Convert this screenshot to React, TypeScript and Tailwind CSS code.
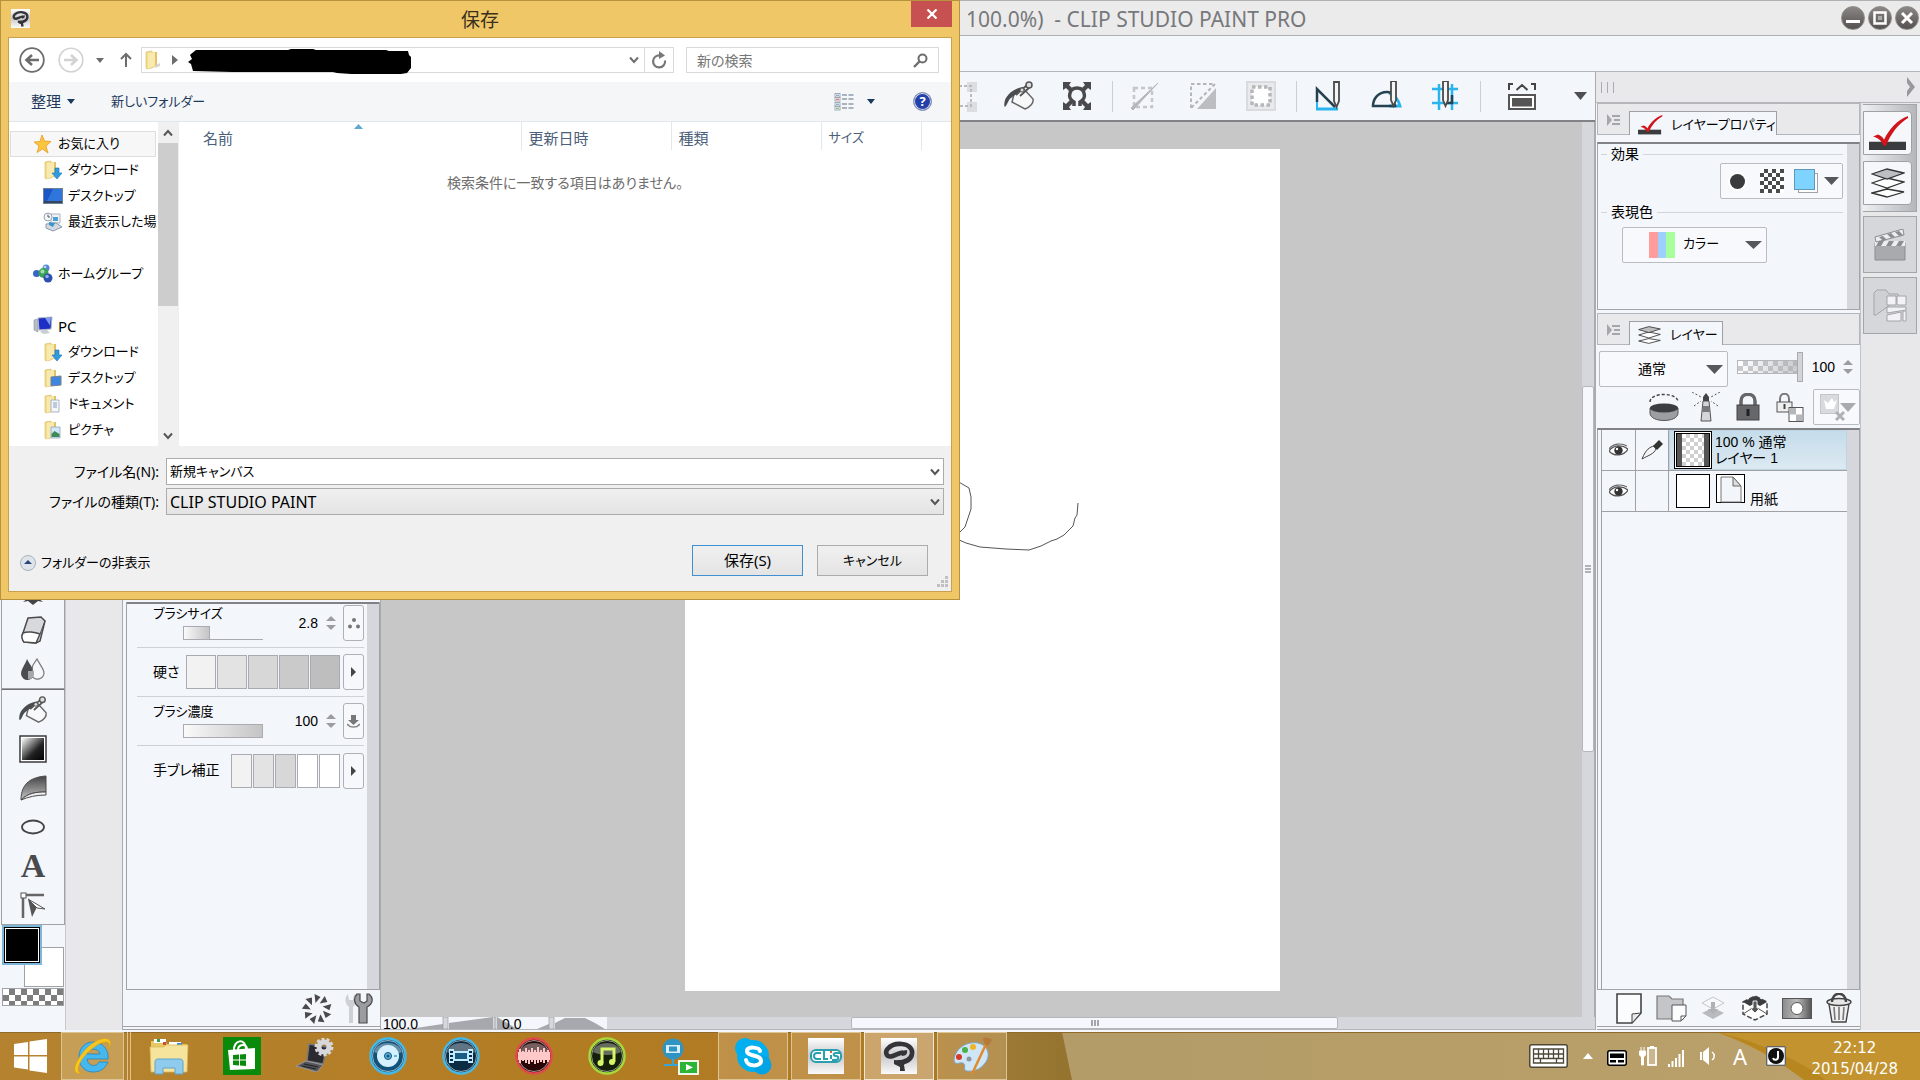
import React, { ReactNode } from "react";

type P = { children?: ReactNode };

/* ---------- shared pieces ---------- */

function Caret({ w = 10, h = 6, c = "#555", className = "" }: { w?: number; h?: number; c?: string; className?: string }) {
  return (
    <svg width={w} height={h} viewBox="0 0 10 6" preserveAspectRatio="none" className={className} aria-hidden>
      <path d="M0 0h10L5 6z" fill={c} />
    </svg>
  );
}

function Chevron({ c = "#555", up = false }: { c?: string; up?: boolean }) {
  return (
    <svg width="10" height="8" viewBox="0 0 10 8" className={up ? "rotate-180" : ""} aria-hidden>
      <path d="M1 1.5l4 4.5 4-4.5" fill="none" stroke={c} strokeWidth="2" />
    </svg>
  );
}

function Spinner({ label }: { label: string }) {
  return (
    <button aria-label={label} className="flex w-[10px] flex-col items-center gap-1">
      <Caret w={10} h={5} c="#9a9ca0" className="rotate-180" />
      <Caret w={10} h={5} c="#9a9ca0" />
    </button>
  );
}

function ClipMark({ size = 36 }: { size?: number }) {
  return (
    <svg width={size} height={size} viewBox="0 0 36 36" aria-hidden>
      <defs>
        <linearGradient id="cm" x1="0" y1="0" x2="0" y2="1">
          <stop offset="0" stopColor="#fff" />
          <stop offset=".5" stopColor="#c9c9cc" />
          <stop offset="1" stopColor="#fafafa" />
        </linearGradient>
      </defs>
      <rect width="36" height="36" fill="url(#cm)" />
      <path d="M22 14.500C17 15 14 17.500 10 18.500 5 19 4 14 6.500 11 10 7 16 5.500 21 6c7 .5 11 5 10 10-1 6-7 8.500-15 8.500" fill="none" stroke="#333338" strokeWidth="4.600" />
      <path d="M20 13l6-1c1 3-1 6-5 6z" fill="#333338" />
      <path d="M13 22l13 1-3 4 1 6h-5v-4l-6-3z" fill="#333338" />
    </svg>
  );
}

function Folder({ overlay }: { overlay?: ReactNode }) {
  return (
    <svg width="20" height="20" viewBox="0 0 20 20" aria-hidden>
      <path d="M2 2l6-1v17l-5 1-1-1z" fill="#f3dc8c" stroke="#d9b95c" strokeWidth=".6" />
      <path d="M8 2h5v14l-5 2z" fill="#e3c263" />
      <path d="M4 3l7-1v14l-7 3z" fill="#f8e9ae" />
      <path d="M12 15l4-2v3l-5 2z" fill="#d5d5d8" />
      {overlay}
    </svg>
  );
}

/* ---------- save dialog ---------- */

const dl = <path d="M12 8h4v5h3l-5 6-5-6h3z" fill="#2d9be0" stroke="#1c74b4" strokeWidth=".6" />;
const dt = <path d="M8 9l10-1v9l-10 1z" fill="#3f86e0" stroke="#777f8c" />;
const doc = <g><path d="M8 6h8v12H8z" fill="#f4f6fa" stroke="#9aa4b4" strokeWidth=".8" /><path d="M10 9h4M10 11h4M10 13h4" stroke="#6f86b4" strokeWidth=".8" /></g>;
const pic = <g><path d="M8 7h9v11H8z" fill="#cfe8fa" stroke="#9aa4b4" strokeWidth=".8" /><path d="M8.500 14l3-3 5 3v3h-8z" fill="#3d8a5a" /></g>;

const star = (
  <svg width="20" height="20" viewBox="0 0 20 20" aria-hidden>
    <path d="M9 1l2.500 6 6.500.5-5 4.500 2 7-5.500-4-5.500 3.500 2-6.500-5-4 6-.5z" fill="#fbc53d" stroke="#e8992a" strokeWidth=".8" />
  </svg>
);
const desktop = (
  <svg width="20" height="20" viewBox="0 0 20 20" aria-hidden>
    <rect x=".5" y="2.500" width="19" height="15" fill="#2f76dc" stroke="#6f7f94" />
    <path d="M1 3h9l-6 12H1z" fill="#1c56c4" /><path d="M1 15h18v2H1z" fill="#34465e" />
  </svg>
);
const recent = (
  <svg width="20" height="20" viewBox="0 0 20 20" aria-hidden>
    <path d="M8 2h9v9H8z" fill="#eef2f6" stroke="#a9b4c0" /><path d="M10 5h5v4h-5z" fill="#4f9fd0" />
    <path d="M3 12l10-1 6 4-9 4-7-3z" fill="#d3dae2" stroke="#8d99a6" />
    <path d="M6 10l6 1-2 4-4-2z" fill="#3a94c8" />
    <circle cx="5" cy="5" r="4" fill="#f3f6f9" stroke="#98a4b0" /><path d="M5 2.500V5h2" stroke="#556" fill="none" />
  </svg>
);
const home = (
  <svg width="20" height="20" viewBox="0 0 20 20" aria-hidden>
    <circle cx="3.500" cy="9.500" r="3.500" fill="#3567c8" /><circle cx="13" cy="4" r="3.500" fill="#4f86da" /><circle cx="12" cy="3" r="1.500" fill="#b5d2f5" />
    <circle cx="10.500" cy="9" r="5" fill="#3ba356" /><circle cx="9.500" cy="7.500" r="2" fill="#a3e0a8" />
    <circle cx="15" cy="14" r="4.500" fill="#2b50ae" /><circle cx="14" cy="12.500" r="1.800" fill="#8fb0ea" />
  </svg>
);
const pc = (
  <svg width="20" height="20" viewBox="0 0 20 20" aria-hidden>
    <path d="M1 4l4-1v13l-4-2z" fill="#b8bec6" stroke="#8a929c" strokeWidth=".6" />
    <path d="M5 2l14-1-1 12-12 1z" fill="#1d2fc4" stroke="#b0b8c4" /><path d="M12 2l6-.5-1 8z" fill="#7d9cf0" />
    <path d="M9 14h5l3 3-6 1-4-2z" fill="#c9ced4" />
  </svg>
);

type Item = { label: string; icon?: ReactNode; depth: number; on?: boolean; latin?: boolean };
const tree: Item[] = [
  { label: "お気に入り", icon: star, depth: 0, on: true },
  { label: "ダウンロード", icon: <Folder overlay={dl} />, depth: 1 },
  { label: "デスクトップ", icon: desktop, depth: 1 },
  { label: "最近表示した場所", icon: recent, depth: 1 },
  { label: "", depth: 0 },
  { label: "ホームグループ", icon: home, depth: 0 },
  { label: "", depth: 0 },
  { label: "PC", icon: pc, depth: 0, latin: true },
  { label: "ダウンロード", icon: <Folder overlay={dl} />, depth: 1 },
  { label: "デスクトップ", icon: <Folder overlay={dt} />, depth: 1 },
  { label: "ドキュメント", icon: <Folder overlay={doc} />, depth: 1 },
  { label: "ピクチャ", icon: <Folder overlay={pic} />, depth: 1 },
];

function SaveDialog() {
  return (
    <section
      role="dialog"
      aria-label="保存"
      className="absolute top-0 left-0 z-20 flex h-[600px] w-[960px] flex-col border border-[#b8933f] bg-[#f0c767] px-[7px] pb-[7px] font-['Noto_Sans','Noto_Sans_CJK_JP',sans-serif] text-[14px] text-black [font-feature-settings:'palt']"
    >
      <header className="flex h-9 shrink-0 items-start">
        <div className="w-[41px] pt-2 pl-[3px]">
          <ClipMark size={19} />
        </div>
        <h1 className="flex-1 pt-[5px] text-center text-[19px] leading-7 text-[#3a3020]">保存</h1>
        <button aria-label="閉じる" className="flex h-[26px] w-[41px] items-center justify-center bg-[#c75050]">
          <svg width="12" height="10" viewBox="0 0 12 10"><path d="M1.500.5l9 9M10.500.5l-9 9" stroke="#fff" strokeWidth="2.200" /></svg>
        </button>
      </header>
      <div className="flex min-h-0 flex-1 flex-col border border-[#c9a14c] bg-white">
        {/* address row */}
        <div className="flex h-[44px] shrink-0 items-center pr-3 pl-[10px]">
          <button aria-label="戻る">
            <svg width="26" height="26" viewBox="0 0 26 26"><circle cx="13" cy="13" r="11.800" fill="none" stroke="#6d6d6d" strokeWidth="1.800" /><path d="M20 13H8m5-5l-5.500 5L13 18" fill="none" stroke="#6d6d6d" strokeWidth="2.600" /></svg>
          </button>
          <button aria-label="進む" className="ml-[13px]">
            <svg width="26" height="26" viewBox="0 0 26 26"><circle cx="13" cy="13" r="11.800" fill="none" stroke="#d2d2d2" strokeWidth="1.600" /><path d="M6 13h12m-5-5l5.500 5L13 18" fill="none" stroke="#d2d2d2" strokeWidth="2.600" /></svg>
          </button>
          <button aria-label="履歴" className="ml-[12px]"><Caret w={8} h={5} c="#6d6d6d" /></button>
          <button aria-label="上へ" className="ml-[15px]">
            <svg width="14" height="16" viewBox="0 0 14 16"><path d="M7 15V2M2 7l5-5 5 5" fill="none" stroke="#6d6d6d" strokeWidth="2" /></svg>
          </button>
          <div className="ml-2 flex h-[26px] flex-1 items-center border border-[#d9d9d9] pl-[2px]">
            <Folder />
            <svg width="6" height="10" viewBox="0 0 6 10" className="ml-[8px]"><path d="M0 0l6 5-6 5z" fill="#6d6d6d" /></svg>
            <svg width="224" height="26" viewBox="0 0 224 26" className="mt-1 ml-[10px]" aria-hidden>
              <path d="M3 5L8 1h92l3-1h22l3 1h70l3 1h19l1 4 2 2v11l-4 5-6 1h-50l-14-1-4-1H44L5 22 3 15 0 13l4-3-2-4z" fill="#000" />
            </svg>
            <button aria-label="場所の一覧" className="ml-auto flex h-full w-[20px] items-center justify-center"><Chevron c="#6d6d6d" /></button>
            <button aria-label="最新の情報に更新" className="flex h-full w-[29px] items-center justify-center border-l border-[#d9d9d9]">
              <svg width="16" height="18" viewBox="0 0 16 18"><path d="M9 4.500a6 6 0 1 0 5 5" fill="none" stroke="#777" strokeWidth="2.200" /><path d="M8 0l6 4.500L8 8z" fill="#777" /></svg>
            </button>
          </div>
          <div className="ml-3 flex h-[26px] w-[253px] items-center border border-[#d9d9d9] pr-[10px]">
            <input aria-label="検索" placeholder="新の検索" className="min-w-0 flex-1 bg-transparent pl-[10px] outline-none placeholder:text-[#767676]" />
            <svg width="15" height="15" viewBox="0 0 15 15"><circle cx="9.500" cy="5.500" r="4" fill="none" stroke="#6d6d6d" strokeWidth="2" /><path d="M7 8l-6 6" stroke="#6d6d6d" strokeWidth="2.400" /></svg>
          </div>
        </div>
        {/* command bar */}
        <div className="flex h-[40px] shrink-0 items-center border-b border-[#e2e6ec] bg-[#f4f6f8] pr-[19px] pl-[22px] text-[#1e395b]">
          <button className="flex items-center gap-[6px] text-[15px]">整理<Caret w={8} h={5} c="#1e395b" /></button>
          <button className="ml-9 text-[13px]">新しいフォルダー</button>
          <button aria-label="表示" className="ml-auto flex items-center gap-[13px]">
            <svg width="20" height="18" viewBox="0 0 20 18">
              {[1, 5, 10, 14].map((y, i) => (
                <g key={y}>
                  <rect x="1" y={y - 0.5} width="5" height="3.500" fill="#fff" stroke="#8e9aa8" strokeWidth=".8" />
                  <path d={`M2 ${y + 1.2}h3`} stroke={["#4a90c8", "#c84a4a", "#4a90c8", "#5aa858"][i]} />
                  <path d={`M8 ${y + 1}h5M14.500 ${y + 1}h5`} stroke="#5d6f88" strokeWidth="1.200" />
                </g>
              ))}
            </svg>
            <Caret w={8} h={5} c="#1e395b" />
          </button>
          <button aria-label="ヘルプ" className="ml-[38px] flex h-[19px] w-[19px] items-center justify-center rounded-full border border-[#8b94b8] bg-[#2341a8] text-[13px] leading-none font-bold text-white ring-1 ring-[#d5d9e6] ring-inset">?</button>
        </div>
        {/* body */}
        <div className="flex min-h-0 flex-1">
          <nav className="flex w-[149px] shrink-0 flex-col overflow-hidden pt-[9px] text-[13px]">
            {tree.map((t, i) => (
              <div
                key={i}
                className={
                  "flex h-[26px] shrink-0 items-center overflow-hidden border whitespace-nowrap " +
                  (t.on ? "mr-[2px] ml-px border-[#dedede] bg-[#f7f7f7] pl-[22px]" : t.depth ? "border-transparent pl-[33px]" : "border-transparent pl-[23px]")
                }
              >
                <span className="shrink-0">{t.icon}</span>
                <span className={"ml-[5px] " + (t.latin ? "text-[15px]" : "")}>{t.label}</span>
              </div>
            ))}
          </nav>
          <div className="flex w-[20px] shrink-0 flex-col items-center bg-[#f0f0f0]">
            <button aria-label="上へスクロール" className="flex h-[21px] items-center"><Chevron up /></button>
            <div className="h-[163px] w-full bg-[#cdcdcd]" />
            <button aria-label="下へスクロール" className="mt-auto flex h-[21px] items-center"><Chevron /></button>
          </div>
          <div className="flex-1 border-l border-[#eeeeee]">
            <table className="w-full table-fixed text-[#4c607a]">
              <thead>
                <tr className="h-[28px] text-left text-[15px]">
                  <th className="relative w-[342px] border-r border-[#e3e8ee] pt-[4px] pl-[24px] font-normal">
                    名前
                    <Caret w={9} h={5} c="#5fa9cf" className="absolute top-[2px] left-[175px] rotate-180" />
                  </th>
                  <th className="w-[150px] border-r border-[#e3e8ee] pt-[4px] pl-[7px] font-normal">更新日時</th>
                  <th className="w-[150px] border-r border-[#e3e8ee] pt-[4px] pl-[7px] font-normal">種類</th>
                  <th className="w-[100px] border-r border-[#e3e8ee] pt-[4px] pl-[7px] text-[13px] font-normal">サイズ</th>
                  <th aria-label="空き" />
                </tr>
              </thead>
              <tbody>
                <tr>
                  <td colSpan={5} className="pt-[22px] text-center text-[#6d6d6d]">検索条件に一致する項目はありません。</td>
                </tr>
              </tbody>
            </table>
          </div>
        </div>
        {/* file fields */}
        <div className="flex h-[145px] shrink-0 flex-col bg-[#f0f0f0] pt-[12px]">
          <div className="flex items-center pr-[7px]">
            <label htmlFor="fname" className="w-[150px] text-right">ファイル名(N):</label>
            <div className="ml-[7px] flex h-[27px] flex-1 items-center border border-[#acacac] bg-white">
              <input id="fname" defaultValue="新規キャンバス" className="min-w-0 flex-1 bg-transparent pl-[3px] text-[13px] outline-none" />
              <button aria-label="ファイル名の候補" className="px-[3px]"><Chevron /></button>
            </div>
          </div>
          <div className="mt-[3px] flex items-center pr-[7px]">
            <label htmlFor="ftype" className="w-[150px] text-right">ファイルの種類(T):</label>
            <div className="relative ml-[7px] flex h-[27px] flex-1 items-center border border-[#acacac] bg-linear-to-b from-[#f0f0f0] to-[#e4e4e4]">
              <select id="ftype" className="w-full appearance-none bg-transparent pl-[3px] text-[16px] outline-none">
                <option>CLIP STUDIO PAINT</option>
              </select>
              <span className="pointer-events-none absolute right-[3px]"><Chevron /></span>
            </div>
          </div>
          <div className="mt-[30px] flex items-center pr-[23px] pl-[11px]">
            <button className="flex items-center gap-[5px] pt-[5px] text-[13px]">
              <svg width="16" height="16" viewBox="0 0 16 16"><circle cx="8" cy="8" r="7.500" fill="#dfe4ea" stroke="#a8b2be" /><path d="M8 5l4 4H4z" fill="#27457f" /></svg>
              フォルダーの非表示
            </button>
            <button className="ml-auto h-[31px] w-[111px] border border-[#3f8fd2] bg-linear-to-b from-[#f0f0f0] to-[#e4e4e4] text-[15px]">保存(S)</button>
            <button className="ml-[14px] h-[31px] w-[111px] border border-[#acacac] bg-linear-to-b from-[#f0f0f0] to-[#e4e4e4] text-[13px]">キャンセル</button>
          </div>
          <svg width="11" height="11" viewBox="0 0 11 11" className="mr-[3px] ml-auto" aria-hidden>
            <path d="M8 0h3v3H8zM4 4h3v3H4zM8 4h3v3H8zM0 8h3v3H0zM4 8h3v3H4zM8 8h3v3H8z" fill="#c0c0c4" />
          </svg>
        </div>
      </div>
    </section>
  );
}

/* ---------- paint window ---------- */

function WindowBtn({ label, children }: { label: string } & P) {
  return (
    <button aria-label={label} className="flex h-6 w-6 items-center justify-center rounded-full border border-[#8f8c8a] bg-linear-to-b from-[#8b8785] to-[#555150]">
      <svg width="16" height="16" viewBox="0 0 16 16" fill="none" stroke="#fff">{children}</svg>
    </button>
  );
}

function Bucket({ size = 32 }: { size?: number }) {
  return (
    <svg width={size} height={size} viewBox="0 0 32 32" aria-hidden>
      <path d="M11 14l9-6 10 11c1 4-3 8-8 10L9 22z" fill="#f8f8fa" stroke="#666" strokeWidth="1.500" />
      <path d="M20 7C12 8 5 13 2 20c-1 4-1 6 0 7 3-3 3-7 6-9 3-3 8-5 12-8z" fill="#4a4c50" />
      <path d="M13 15L24 5M17 16L27 7" stroke="#555" strokeWidth="1.800" />
      <circle cx="26" cy="5" r="3" fill="#ddd" stroke="#555" strokeWidth="1.500" /><circle cx="19" cy="10" r="2" fill="#ddd" stroke="#555" />
    </svg>
  );
}

function Pen({ x }: { x: number }) {
  return <path d={`M${x} 1h5v19l-2.500 6-2.500-6z`} fill="#f5f5f5" stroke="#4a4a4a" strokeWidth="1.800" />;
}

const toolbarGroups: { label: string; icon: ReactNode }[][] = [
  [
    { label: "選択範囲外を消去", icon: <svg width="32" height="32" viewBox="0 0 32 32"><path d="M22 2h10v10H22zM22 22h10v10H22z" fill="#dcdde0" /><path d="M4 6h22v20H4z" fill="none" stroke="#b9babd" strokeWidth="2" strokeDasharray="3 2" /></svg> },
    { label: "塗りつぶし", icon: <Bucket /> },
    { label: "拡大・縮小・回転", icon: <svg width="28" height="28" viewBox="0 0 28 28"><path d="M0 0h8L6 3l4 4-3 3-4-4-3 2zM28 0h-8l2 3-4 4 3 3 4-4 3 2zM0 28h8l-2-3 4-4-3-3-4 4-3-2zM28 28h-8l2-3-4-4 3-3 4 4 3-2z" fill="#4a4a4c" /><path d="M11 24v-4c-4-2-5-6-4-9 1-4 4-5 7-5s6 1 7 5c1 3 0 7-4 9v4" fill="none" stroke="#4a4a4c" strokeWidth="3.500" /></svg> },
  ],
  [
    { label: "選択を解除", icon: <svg width="30" height="30" viewBox="0 0 30 30"><path d="M4 7h18v19H4z" fill="none" stroke="#c5c6c9" strokeWidth="2.500" strokeDasharray="4 3" /><path d="M1 27L28 2 3 29z" fill="#b5b6b9" stroke="#b5b6b9" /></svg> },
    { label: "選択範囲を反転", icon: <svg width="28" height="28" viewBox="0 0 28 28"><path d="M27 6v21H8z" fill="#bcbdc0" /><path d="M2 26V2h24z" fill="none" stroke="#b5b6b9" strokeWidth="2" strokeDasharray="3.500 2.500" /></svg> },
    { label: "選択範囲の境界線を表示", icon: <svg width="30" height="30" viewBox="0 0 30 30"><path d="M1 1h28v28H1z" fill="#e9eaec" stroke="#dadbde" strokeWidth="2" /><path d="M6 6h18v18H6z" fill="#fff" stroke="#b5b6b9" strokeWidth="3.500" strokeDasharray="3.500 2.500" /></svg> },
  ],
  [
    { label: "定規にスナップ", icon: <svg width="30" height="30" viewBox="0 0 30 30"><path d="M3 28V8" stroke="#2bb5ee" strokeWidth="2" /><path d="M2 28h22" stroke="#2bb5ee" strokeWidth="3" /><path d="M3 21V8l18 18" fill="none" stroke="#26424f" strokeWidth="2.500" /><Pen x={20} /></svg> },
    { label: "特殊定規にスナップ", icon: <svg width="32" height="30" viewBox="0 0 32 30"><path d="M18 12c6 2 10 8 11 13H18" fill="none" stroke="#2bb5ee" strokeWidth="3" /><path d="M2 25c0-7 5-14 14-14 3 0 4 1 5 1L24 25z" fill="none" stroke="#26424f" strokeWidth="2.500" /><g transform="translate(0 -1)"><Pen x={20} /></g></svg> },
    { label: "グリッドにスナップ", icon: <svg width="28" height="30" viewBox="0 0 28 30"><path d="M8 3v26M21 3v26M1 8h26M1 22h26" stroke="#2bb5ee" strokeWidth="2.500" /><path d="M15 22h6v-8" fill="none" stroke="#26424f" strokeWidth="2.500" /><g transform="translate(0 -1)"><Pen x={12} /></g></svg> },
  ],
];

function Toolbar() {
  return (
    <div className="flex h-[50px] shrink-0 items-center justify-end border-b-2 border-[#808286] bg-[#f3f6fb] pr-[8px]">
      {toolbarGroups.map((g, i) => (
        <React.Fragment key={i}>
          {g.map((t) => (
            <button key={t.label} aria-label={t.label} className="flex w-[58px] items-center justify-center">{t.icon}</button>
          ))}
          <div className="mr-[3px] ml-[6px] h-[31px] w-px bg-[#cdcfd3]" />
        </React.Fragment>
      ))}
      <button aria-label="ウィンドウ表示" className="flex w-[76px] items-center justify-center">
        <svg width="28" height="27" viewBox="0 0 28 27"><path d="M1 7V1h4M27 7V1h-4M8.500 7L14 2l5.500 5" fill="none" stroke="#444" strokeWidth="2" /><rect x="1" y="12" width="26" height="14" fill="#fff" stroke="#555" strokeWidth="2" /><rect x="4" y="15" width="20" height="8.500" fill="#555" /></svg>
      </button>
      <button aria-label="その他" className="ml-[14px]"><Caret w={13} h={8} c="#4d4f52" /></button>
    </div>
  );
}

const lowerTools: { label: string; icon: ReactNode }[] = [
  { label: "塗りつぶし", icon: <Bucket size={30} /> },
  { label: "グラデーション", icon: <svg width="28" height="28" viewBox="0 0 28 28"><defs><linearGradient id="gt" x1="0" y1="0" x2="1" y2="1"><stop offset="0" stopColor="#fff" /><stop offset=".6" stopColor="#222" /><stop offset="1" stopColor="#000" /></linearGradient></defs><rect x="1" y="1" width="26" height="26" fill="#fff" stroke="#3a3a3c" strokeWidth="1.500" /><rect x="3" y="3" width="22" height="22" fill="url(#gt)" /></svg> },
  { label: "図形", icon: <svg width="28" height="28" viewBox="0 0 28 28"><defs><linearGradient id="fg" x1="0" y1="0" x2="0" y2="1"><stop offset="0" stopColor="#444" /><stop offset="1" stopColor="#c4c4c6" /></linearGradient></defs><path d="M27 2C14 3 2 8 2 26c7-7 15-8 25-8z" fill="url(#fg)" stroke="#4a4a4a" /><path d="M2 26c7-7 15-8 25-8v3c-10 0-18 2-25 5z" fill="#eee" stroke="#4a4a4a" /></svg> },
  { label: "楕円", icon: <svg width="26" height="18" viewBox="0 0 26 18"><ellipse cx="13" cy="9" rx="11" ry="6.500" fill="none" stroke="#444" strokeWidth="1.800" /></svg> },
  { label: "テキスト", icon: <span className="font-['Liberation_Serif',serif] text-[34px] leading-9 font-bold text-[#4a4a4c]">A</span> },
  { label: "線修正", icon: <svg width="28" height="28" viewBox="0 0 28 28"><path d="M4 5v22M5 4h20" stroke="#666" strokeWidth="2.500" /><rect x="2" y="2" width="5" height="5" fill="#fff" stroke="#555" /><path d="M9 8l4 18 5-10z" fill="#555" /><path d="M9 8l17 10-8-1z" fill="#fff" stroke="#555" /></svg> },
];

const upperTools: { label: string; icon: ReactNode }[] = [
  { label: "デコレーション", icon: <svg width="24" height="28" viewBox="0 0 24 28"><path d="M12 1l3 6 6-2-2 6 5 4-5 2-1 5H6l-1-5-5-2 5-4-2-6 6 2z" fill="#777" /><path d="M2 25l5-4 5 1 5-1 5 4-5-1-5 4-5-4z" fill="#444" /></svg> },
  { label: "消しゴム", icon: <svg width="28" height="30" viewBox="0 0 28 30"><path d="M9 3l13-1 4 4-5 20-4 2-12-1-2-6z" fill="#d8d9dc" stroke="#4a4a4c" strokeWidth="1.500" /><path d="M4 18c4-2 12-1 17 1l-4 9-12-1c-2-2-3-6-1-9z" fill="#fff" stroke="#4a4a4c" strokeWidth="1.500" /><path d="M21 19l5-13" stroke="#4a4a4c" /></svg> },
  { label: "色混ぜ", icon: <svg width="28" height="24" viewBox="0 0 28 24"><path d="M8 2c3 6 7 10 7 14a6.500 6.500 0 0 1-13 1C2 12 6 8 8 2z" fill="#4a4c50" /><path d="M18 2c3 6 7 10 7 14a6.500 6.500 0 0 1-12 3c2-5-1-8 1-11z" fill="#f6f7fa" stroke="#777" strokeWidth="1.200" /><path d="M9 14h6v4a6 6 0 0 1-6 4z" fill="#a6a7aa" /></svg> },
];

function ToolButton({ label, children }: { label: string } & P) {
  return <button aria-label={label} className="flex h-[39px] w-full shrink-0 items-center justify-center">{children}</button>;
}

function ToolColumn() {
  return (
    <div className="flex w-[66px] shrink-0 flex-col border-r border-[#c8c9cc] bg-[#f3f6fb] pl-px">
      <div className="flex h-[567px] shrink-0 flex-col justify-end border-x border-b border-[#9fa1a5]">
        {upperTools.map((t) => <ToolButton key={t.label} label={t.label}>{t.icon}</ToolButton>)}
      </div>
      <div className="flex shrink-0 flex-col border border-[#9fa1a5] border-t-[#6f7175]">
        {lowerTools.map((t) => <ToolButton key={t.label} label={t.label}>{t.icon}</ToolButton>)}
      </div>
      <div className="relative ml-px h-[62px] w-[62px] shrink-0">
        <button aria-label="サブカラー" className="absolute right-0 bottom-0 h-10 w-10 border border-[#9fa1a5] bg-white" />
        <button aria-label="メインカラー" className="absolute top-0 left-0 flex h-10 w-10 border-2 border-[#7cb6da] bg-black p-px">
          <span className="flex-1 border border-white" />
        </button>
      </div>
      <button aria-label="透明色" className="mt-px ml-px h-[18px] w-[62px] shrink-0 border border-[#9fa1a5] bg-[repeating-conic-gradient(#7d7d7d_0_25%,#fff_0_50%)] bg-[length:12px_12px]" />
    </div>
  );
}

function SideButton({ label, children }: { label: string } & P) {
  return <button aria-label={label} className="flex h-9 w-[21px] items-center justify-center rounded-[3px] border border-[#aeb0b5] bg-[#f6f8fc]">{children}</button>;
}

const playIcon = <svg width="5" height="10" viewBox="0 0 5 10"><path d="M0 0l5 5-5 5z" fill="#444" /></svg>;

function SwatchRow({ label, colors, wide }: { label: string; colors: string[]; wide?: boolean }) {
  return (
    <div className="flex h-[49px] shrink-0 items-center border-b border-[#cfd1d6]">
      <span className="ml-4 flex-1">{label}</span>
      <div className="mr-[3px] flex gap-px">
        {colors.map((c, i) => (
          <button key={i} aria-label={`${label} ${i + 1}`} className={(wide ? "w-[30px] " : "w-[21px] ") + "h-[34px] border border-[#a9abb0] " + c} />
        ))}
      </div>
      <SideButton label={`${label}の詳細`}>{playIcon}</SideButton>
    </div>
  );
}

function SliderRow({ label, id, value, fill, icon, button }: { label: string; id: string; value: string; fill: string; icon: ReactNode; button: string }) {
  return (
    <div className="flex h-[49px] shrink-0 items-center border-b border-[#cfd1d6]">
      <div className="ml-4 flex-1">
        <label htmlFor={id} className="block pb-1 text-[13px] leading-4">{label}</label>
        <div className="relative ml-[30px] flex h-[14px] w-[80px]">
          <div className={"border border-[#a9abb0] bg-linear-to-r from-[#fafafa] to-[#c4c4c4] " + fill} />
          <div className="flex-1 border-b border-[#a9abb0]" />
          <input id={id} type="range" defaultValue={value} className="absolute inset-0 m-0 h-full w-full opacity-0" />
        </div>
      </div>
      <span className="mr-2">{value}</span>
      <Spinner label={`${label}の増減`} />
      <div className="ml-[7px]"><SideButton label={button}>{icon}</SideButton></div>
    </div>
  );
}

function BrushPanel() {
  return (
    <div className="ml-[56px] flex w-[259px] shrink-0 flex-col border-x border-[#a9abb0] bg-[#f3f6fb] pl-[3px]">
      <div className="h-[480px] shrink-0" />
      <div className="flex min-h-0 flex-1 flex-col border-x border-b border-[#9fa1a5]">
        <div className="flex min-h-0 flex-1 border-t-2 border-[#808286]">
          <div className="flex min-w-0 flex-1 flex-col pr-[3px] pl-[10px]">
            <div className="-mt-[5px] flex flex-col">
              <SliderRow label="ブラシサイズ" id="bsize" value="2.8" fill="w-[27px]" button="影響元設定" icon={<svg width="12" height="11" viewBox="0 0 12 11"><circle cx="6" cy="2" r="2" fill="#777" /><circle cx="2" cy="8.500" r="2" fill="#777" /><circle cx="10" cy="8.500" r="2" fill="#777" /></svg>} />
              <SwatchRow label="硬さ" wide colors={["bg-[#f2f2f2]", "bg-[#e3e3e3]", "bg-[#d7d7d7]", "bg-[#cacaca]", "bg-[#bebebe]"]} />
              <SliderRow label="ブラシ濃度" id="bdens" value="100" fill="w-[80px]" button="筆圧設定" icon={<svg width="13" height="13" viewBox="0 0 13 13"><path d="M4 0h5v5h3L6.500 10 1 5h3z" fill="#777" /><path d="M0 9c3 4 10 4 13 0" fill="none" stroke="#888" strokeWidth="1.500" /></svg>} />
              <div className="[&>div]:border-0">
                <SwatchRow label="手ブレ補正" colors={["bg-[#f2f2f2]", "bg-[#e3e3e3]", "bg-[#d7d7d7]", "bg-white", "bg-white"]} />
              </div>
            </div>
          </div>
          <div className="w-[12px] bg-[#d6d7dd]" />
        </div>
      </div>
      <div className="flex h-9 shrink-0 items-center justify-end gap-[13px] pt-px pr-[7px]">
        <button aria-label="初期設定に戻す">
          <svg width="30" height="30" viewBox="0 0 30 30">
            {[0, 40, 80, 120, 160, 200, 240, 280, 320].map((a) => (
              <path key={a} d="M12.500 0l6 3-5 6z" fill="#4a4a4c" transform={`rotate(${a} 15 15)`} />
            ))}
          </svg>
        </button>
        <button aria-label="サブツール詳細">
          <svg width="28" height="31" viewBox="0 0 28 31"><path d="M4 30V14C0 11-1 5 3 1l1 6h4l1-6c3 4 3 10-1 13v16z" fill="#cfd0d3" /><path d="M14 30V14c-5-3-6-9-2-13h3v7l4 2 3-2V1h2c5 4 4 10-2 13v16z" fill="#9b9c9f" stroke="#4a4a4c" strokeWidth="1.200" /></svg>
        </button>
      </div>
      <div className="-ml-[3px] h-[4px] shrink-0 border-y border-[#9fa1a5]" />
    </div>
  );
}

function CanvasArea() {
  return (
    <main className="flex min-w-0 flex-1 flex-col">
      <div className="flex min-h-0 flex-1">
        <div className="flex flex-1 items-center justify-center overflow-hidden bg-[#c7c7c7] pl-[2px]">
          <div className="relative h-[842px] w-[595px] shrink-0 bg-white">
            <svg viewBox="0 0 595 842" className="absolute inset-0" fill="none" stroke="#555" aria-hidden>
              <path d="M272 332l12 7 2 9v12l-6 18-6 6M272 390l9 4 14 4 26 2 23 1 12-4 10-5 6-2 7-4 9-9 2-8 2-3 1-12" />
            </svg>
          </div>
        </div>
        <div className="flex w-[13px] shrink-0 flex-col border-r border-[#a9abb0] bg-[#d6d7dd]">
          <button aria-label="縦スクロール" className="mt-[264px] flex h-[366px] w-full flex-col items-center justify-center gap-px rounded-[2px] border border-[#b4b6bb] bg-[#f5f7fc]">
            {[0, 1, 2].map((i) => <span key={i} className="h-[2px] w-[6px] bg-[#b0b2b8]" />)}
          </button>
        </div>
      </div>
      <div className="flex h-[13px] shrink-0 border-b border-[#b4b6bb] bg-[#d6d7dd]">
        <div className="relative h-[12px] w-[226px] bg-[#f3f6fb]">
          <svg width="226" height="12" viewBox="0 0 226 12" className="block" aria-hidden>
            <path d="M28 12l34-5v5zM68 6l44-6v12H68zM116 0l20 12h-20zM156 12l12-5v5zM174 6l10-5h20l10 5 10 6h-50z" fill="#a6a8ad" />
            <path d="M62 0h5v12h-5zM168 0h5v12h-5zM113 0h2v12h-2z" fill="#d6d7dd" stroke="#8f9196" strokeWidth=".6" />
          </svg>
          <span className="absolute -top-px left-[2px] text-[14px] leading-4 text-black">100.0</span>
          <span className="absolute -top-px left-[121px] text-[14px] leading-4 text-black">0.0</span>
        </div>
        <button aria-label="横スクロール" className="ml-[244px] flex h-full w-[487px] items-center justify-center gap-px rounded-[2px] border border-[#b4b6bb] bg-[#f5f7fc]">
          {[0, 1, 2].map((i) => <span key={i} className="h-[6px] w-[2px] bg-[#a3a5ab]" />)}
        </button>
      </div>
    </main>
  );
}

function Sheets({ w, h }: { w: number; h: number }) {
  return (
    <svg width={w} height={h} viewBox="0 0 34 30" preserveAspectRatio="none" aria-hidden>
      <path d="M1 25l15-4 17 3-17 5zM1 15l15-5 17 4-17 6z" fill="#fff" stroke="#333" strokeWidth="1.300" />
      <path d="M1 6l15-5 17 4-17 6z" fill="#bdbec1" stroke="#333" strokeWidth="1.300" />
    </svg>
  );
}

function CheckMark({ w, h }: { w: number; h: number }) {
  return (
    <svg width={w} height={h} viewBox="0 0 40 34" preserveAspectRatio="none" className="shrink-0" aria-hidden>
      <path d="M0 25h37v8H0z" fill="#3a3b3d" />
      <path d="M4 20l5-2c3 1 5 3 6 5C20 13 28 4 39 0v2C29 8 22 17 17 29h-2c-3-5-6-8-11-9z" fill="#d3131a" />
    </svg>
  );
}

function PanelHeader({ children, w }: P & { w: string }) {
  return (
    <div className="flex h-8 shrink-0 items-end border border-[#b4b6ba] bg-[#e9e9eb]">
      <button aria-label="メニュー表示" className="mb-[8px] ml-[9px] w-[22px]">
        <svg width="13" height="12" viewBox="0 0 13 12"><path d="M0 0l5 6-5 6z" fill="#a5a6a9" /><path d="M5 2h8M7 6h6M5 10h8" stroke="#a5a6a9" strokeWidth="2" /></svg>
      </button>
      <div className={"-mb-px flex h-[24px] items-center border border-b-0 border-[#9fa1a5] bg-[#f3f6fb] pt-[3px] pl-[8px] text-[13px] whitespace-nowrap " + w}>{children}</div>
    </div>
  );
}

function GroupTitle({ children }: P) {
  return (
    <div className="flex h-5 items-center gap-1 pr-[4px] pl-[3px]">
      <span className="h-px w-[6px] bg-[#d3d5da]" />
      <span>{children}</span>
      <span className="h-px flex-1 bg-[#d3d5da]" />
    </div>
  );
}

function Eye() {
  return (
    <svg width="19" height="14" viewBox="0 0 19 14" aria-hidden>
      <path d="M0 8C4 2 13 1 19 6 15 13 5 14 0 8z" fill="#fff" stroke="#555" strokeWidth="1.300" />
      <path d="M0 6C4 0 13 0 18 3" fill="none" stroke="#666" strokeWidth="1.200" />
      <circle cx="9.500" cy="7.500" r="4.200" fill="#333" /><circle cx="8" cy="6" r="1.200" fill="#fff" />
    </svg>
  );
}

const layerActions: { label: string; icon: ReactNode }[] = [
  { label: "新規レイヤー", icon: <svg width="26" height="31" viewBox="0 0 26 31"><path d="M1 1h24v19l-9 10H1z" fill="#fbfcfe" stroke="#444" strokeWidth="1.600" /><path d="M25 20l-9 1v9z" fill="#e8e9ec" stroke="#444" /></svg> },
  { label: "新規フォルダー", icon: <svg width="31" height="27" viewBox="0 0 31 27"><path d="M1 1h12l3 3h11v20H1z" fill="#c4c5c8" stroke="#777" strokeWidth="1.200" /><path d="M16 10h14v11l-5 5h-9z" fill="#fbfcfe" stroke="#555" /><path d="M30 21h-5v5" fill="none" stroke="#555" /></svg> },
  { label: "転写", icon: <svg width="24" height="24" viewBox="0 0 24 24"><path d="M1 7l11-6 11 6-11 6z" fill="#f7f8fb" stroke="#c4c5c9" /><path d="M1 17l8-4h6l8 4-11 6z" fill="#b9babe" /><path d="M10 6h4v7h3l-5 5-5-5h3z" fill="#b0b1b5" /></svg> },
  { label: "結合", icon: <svg width="26" height="26" viewBox="0 0 26 26"><path d="M1 7l12-6 12 6v12l-12 6-12-6z" fill="#fff" stroke="#444" strokeWidth="1.500" strokeDasharray="5 2" /><path d="M1 7l12-6 12 6-7 4-5-3-5 3z" fill="#3c3d40" /><path d="M11 6h4v7h3l-5 5-5-5h3z" fill="#555" stroke="#eee" /><path d="M1 19l8-5M25 19l-8-5" stroke="#555" /></svg> },
  { label: "マスク", icon: <svg width="30" height="21" viewBox="0 0 30 21"><defs><linearGradient id="mk"><stop offset="0" stopColor="#8a8b8e" /><stop offset=".5" stopColor="#bbb" /><stop offset="1" stopColor="#555" /></linearGradient></defs><rect x=".5" y=".5" width="29" height="20" fill="url(#mk)" stroke="#555" /><circle cx="15" cy="10.500" r="6" fill="#fff" stroke="#555" /></svg> },
  { label: "削除", icon: <svg width="26" height="31" viewBox="0 0 26 31"><path d="M3 11h20l-3 18H6z" fill="#f0f0f2" stroke="#444" strokeWidth="1.400" /><path d="M8 14l1 13M13 14v13M18 14l-1 13" stroke="#777" strokeWidth="1.600" /><ellipse cx="13" cy="9" rx="12" ry="3.500" fill="#e6e6e8" stroke="#444" strokeWidth="1.400" /><path d="M6 9c0-11 14-11 14 0" fill="none" stroke="#444" strokeWidth="2.400" /></svg> },
];

function LayerPanels() {
  return (
    <div className="flex w-[263px] shrink-0 flex-col">
      <PanelHeader w="w-[148px]">
        <CheckMark w={25} h={20} />
        <span className="ml-[8px]">レイヤープロパティ</span>
      </PanelHeader>
      <div className="mt-[7px] flex h-[168px] shrink-0 border border-t-2 border-[#a3a5a9] border-t-[#808286]">
        <div className="flex flex-1 flex-col">
          <GroupTitle>効果</GroupTitle>
          <div className="mr-[4px] -mt-px flex h-9 w-[123px] items-center self-end rounded-[2px] border border-[#b9bbc0] bg-[#f8f9fd] pl-[9px]">
            <button aria-label="境界効果" className="h-[15px] w-[15px] rounded-full bg-[#3a3b3d] ring-2 ring-white" />
            <button aria-label="トーン" className="ml-[15px] h-6 w-6 bg-[repeating-conic-gradient(#4a4b4d_0_25%,#fff_0_50%)] bg-[length:8px_8px]" />
            <button aria-label="レイヤーカラー" className="relative ml-[10px] h-6 w-6">
              <span className="absolute right-0 bottom-0 h-5 w-5 border border-[#a0a2a8] bg-white" />
              <span className="absolute top-0 left-0 h-[21px] w-[21px] border border-[#5f98b8] bg-[#7fd3ff]" />
            </button>
            <button aria-label="効果一覧" className="ml-[6px]"><Caret w={15} h={8} c="#55575b" /></button>
          </div>
          <div className="mt-[3px]"><GroupTitle>表現色</GroupTitle></div>
          <div className="relative mt-[5px] ml-[24px] flex h-9 w-[145px] items-center rounded-[2px] border border-[#b9bbc0] bg-[#f8f9fd]">
            <span className="absolute left-[26px] h-[26px] w-[26px] bg-[linear-gradient(90deg,#ff9c9c_33%,#9cd0ff_33%_66%,#a9ff9c_66%)]" />
            <select aria-label="表現色" className="w-full appearance-none bg-transparent pb-[3px] pl-[60px] text-[13px] outline-none"><option>カラー</option></select>
            <Caret w={17} h={8} c="#55575b" className="pointer-events-none absolute right-[4px]" />
          </div>
        </div>
        <div className="w-[12px] bg-[#d6d7dd]" />
      </div>
      <div className="mt-[3px] flex min-h-0 flex-1 flex-col">
        <PanelHeader w="w-[94px]">
          <Sheets w={23} h={18} />
          <span className="ml-[9px]">レイヤー</span>
        </PanelHeader>
        <div className="mt-[6px] flex h-9 shrink-0 items-center pr-[7px] pl-[2px]">
          <div className="relative flex h-9 w-[129px] items-center rounded-[2px] border border-[#b9bbc0] bg-[#f8f9fd]">
            <select aria-label="合成モード" className="w-full appearance-none bg-transparent pl-[38px] outline-none"><option>通常</option></select>
            <Caret w={17} h={9} c="#55575b" className="pointer-events-none absolute right-[4px]" />
          </div>
          <div className="flex flex-1 items-center pb-1">
            <div className="relative ml-[9px] flex h-[30px] w-[66px] items-center">
              <span className="h-[14px] w-full border border-[#b4b6bb] bg-[linear-gradient(90deg,#ffffff00,#a9abb0aa),repeating-conic-gradient(#c9cacc_0_25%,#fff_0_50%)] bg-[length:100%_100%,10px_10px]" />
              <span className="absolute right-0 h-full w-[6px] border border-[#a9abb0] bg-[#d3d4d8]" />
              <input aria-label="不透明度" type="range" defaultValue={100} className="absolute inset-0 m-0 w-full opacity-0" />
            </div>
            <span className="mr-[8px] ml-auto">100</span>
            <Spinner label="不透明度の増減" />
          </div>
        </div>
        <div className="mt-[2px] flex h-9 shrink-0 items-center justify-end">
          <button aria-label="下のレイヤーでクリッピング" className="flex w-[42px] justify-center">
            <svg width="30" height="28" viewBox="0 0 30 28"><path d="M1 15v5c0 10 28 10 28 0v-5z" fill="#9d9ea1" stroke="#555" /><ellipse cx="15" cy="15" rx="14" ry="4.500" fill="#3c3d40" /><path d="M1 9c0-10 28-10 28 0" fill="none" stroke="#444" strokeWidth="1.500" strokeDasharray="3 2" /></svg>
          </button>
          <button aria-label="参照レイヤー" className="flex w-[42px] justify-center">
            <svg width="28" height="30" viewBox="0 0 28 30"><path d="M11 9h6l2 20H9z" fill="#d4d5d8" stroke="#555" /><path d="M11 14h6l1 6h-8z" fill="#77787b" /><path d="M11 5l3-4 3 4v4h-6z" fill="#444" /><path d="M0 0l9 5M28 0l-9 5M2 14l7-5M26 14l-7-5" stroke="#555" strokeDasharray="2 2" /></svg>
          </button>
          <button aria-label="レイヤーをロック" className="flex w-[42px] justify-center">
            <svg width="24" height="28" viewBox="0 0 24 28"><path d="M5 13V8c0-9 14-9 14 0v5" fill="none" stroke="#66676a" strokeWidth="3.500" /><rect x="1" y="12" width="22" height="15" fill="#66676a" stroke="#444" /><path d="M10.500 16h3v7h-3z" fill="#222" /></svg>
          </button>
          <button aria-label="透明ピクセルをロック" className="flex w-[42px] justify-center">
            <svg width="28" height="29" viewBox="0 0 28 29"><path d="M4 9V6c0-7 9-7 9 0v3" fill="none" stroke="#77787b" strokeWidth="2" /><rect x="1" y="9" width="15" height="10" fill="#eee" stroke="#555" /><path d="M7.500 11h2v5h-2z" fill="#444" /><rect x="13" y="14.500" width="14" height="14" fill="#fff" stroke="#555" /><path d="M13.500 15h6.500v6.500h-6.500zM20 21.500h6.500V28H20z" fill="#b5b6b9" /></svg>
          </button>
          <button aria-label="マスクを有効化" className="ml-[2px] flex h-9 w-[47px] items-center rounded-[2px] border border-[#b9bbc0] bg-[#f8f9fd] pl-[6px]">
            <svg width="36" height="27" viewBox="0 0 36 27"><rect x=".5" y=".5" width="18" height="19" fill="#d9dade" stroke="#c4c5c9" /><path d="M4 6l4 3 4-5 2 4 3-2-3 9H6z" fill="#fff" /><path d="M20 9h16l-8 9z" fill="#a9aaae" /><path d="M16 18l8 8M24 18l-8 8" stroke="#b0b1b5" strokeWidth="3" /></svg>
          </button>
        </div>
        <div className="mt-[3px] flex min-h-0 flex-1 border border-t-2 border-[#a3a5a9] border-t-[#808286] pl-[3px]">
          <div className="flex-1 border-l border-[#9fa1a5] text-[14px] leading-4">
            <div className="flex h-[41px] border-b border-[#9fa1a5]">
              <button aria-label="レイヤー 1の表示" className="flex w-[34px] items-center justify-center border-r border-[#9fa1a5]"><Eye /></button>
              <span className="flex w-[33px] items-center justify-center border-r border-[#9fa1a5]">
                <svg width="22" height="20" viewBox="0 0 22 20" aria-hidden><path d="M1 19C5 9 9 7 13 6l2 3C13 14 8 15 1 19z" fill="#f4f4f6" stroke="#444" /><path d="M12 6l6-6 4 4-6 6z" fill="#333" /></svg>
              </span>
              <div className="flex flex-1 items-center border border-[#c0d3e0] bg-linear-to-b from-[#c5dcea] to-[#dce9f2] pl-[4px]">
                <span className="flex h-[38px] w-[38px] shrink-0 border border-black bg-white p-px">
                  <span className="flex flex-1 border border-black bg-[#555]">
                    <span className="mx-[5px] flex-1 bg-[repeating-conic-gradient(#d0d0d0_0_25%,#fff_0_50%)] bg-[length:8px_8px]" />
                  </span>
                </span>
                <span className="ml-[3px] pb-px text-black">100 % 通常<br />レイヤー 1</span>
              </div>
            </div>
            <div className="flex h-[41px] border-b border-[#9fa1a5]">
              <button aria-label="用紙の表示" className="flex w-[34px] items-center justify-center border-r border-[#9fa1a5]"><Eye /></button>
              <span className="w-[33px] border-r border-[#9fa1a5]" />
              <div className="flex flex-1 pt-[3px] pl-[7px]">
                <span className="h-[34px] w-[34px] shrink-0 border border-black bg-white" />
                <svg width="29" height="29" viewBox="0 0 29 29" className="ml-[6px] shrink-0" aria-hidden><rect x=".5" y=".5" width="28" height="28" fill="#fff" stroke="#000" /><path d="M5 3h12l8 9v16H5z" fill="#f2f5fa" stroke="#777" /><path d="M17 3v9h8z" fill="#ddd" stroke="#666" /></svg>
                <span className="mt-[17px] ml-[5px]">用紙</span>
              </div>
            </div>
          </div>
          <div className="w-[12px] bg-[#d6d7dd]" />
        </div>
        <div className="flex h-9 shrink-0 items-center pl-[11px]">
          {layerActions.map((a) => (
            <button key={a.label} aria-label={a.label} className="flex w-[42px] items-center justify-center">{a.icon}</button>
          ))}
        </div>
        <div className="h-[4px] shrink-0 border-y border-[#9fa1a5]" />
      </div>
    </div>
  );
}

function DockTabs() {
  return (
    <div className="flex flex-1 flex-col border-l border-[#c0c2c6] bg-[#e8e8ea] pr-[3px] pl-[2px]">
      <div className="mt-[1px] flex h-[108px] flex-col gap-[6px] border border-l-0 border-[#a3a5a9] bg-linear-to-r from-[#eeeff2] to-[#b5b7bb] py-[6px] pr-[4px]">
        <button aria-label="レイヤープロパティ" className="flex h-[45px] items-center justify-center rounded-r-[4px] border border-[#9fa1a5] bg-[#f5f7fb] pl-[3px]"><CheckMark w={40} h={35} /></button>
        <button aria-label="レイヤー" className="flex h-[45px] items-center justify-center rounded-r-[4px] border border-[#9fa1a5] bg-[#f5f7fb]"><Sheets w={34} h={30} /></button>
      </div>
      <button aria-label="アニメーション" className="mt-[4px] flex h-[57px] items-center justify-center border border-[#a3a5a9] bg-[#d6d7db]">
        <svg width="32" height="32" viewBox="0 0 32 32"><path d="M1 14h30v17H1z" fill="#a9aaae" stroke="#8c8d91" /><path d="M1 12h30v5H1z" fill="#eee" /><path d="M1 8L29 0l1 6L2 13z" fill="#eee" stroke="#8c8d91" /><path d="M5 8l4-1 4 4-4 1zM13 5l4-1 4 4-4 1zM21 3l4-1 4 4-4 1zM5 12h5l-3 5H2zM15 12h5l-3 5h-5zM25 12h5l-3 5h-5z" fill="#8c8d91" /></svg>
      </button>
      <button aria-label="素材" className="mt-[4px] flex h-[57px] items-center justify-center border border-[#a3a5a9] bg-[#d6d7db]">
        <svg width="34" height="34" viewBox="0 0 34 34"><path d="M1 26V4l3-3h9l3 4h9v5L3 26z" fill="#cfd0d4" stroke="#a3a4a8" /><path d="M14 7h9v9h-9zM24 7h9v9h-9zM14 18h19v3l-19 3zM14 26l14-3v9H14zM30 22h3v10h-3z" fill="#f3f3f5" stroke="#a3a4a8" /></svg>
      </button>
    </div>
  );
}

/* ---------- taskbar ---------- */

function Orb({ ring, inner, children }: P & { ring: string; inner: string }) {
  return (
    <svg width="38" height="38" viewBox="0 0 38 38" aria-hidden>
      <circle cx="19" cy="19" r="17.500" fill={inner} stroke={ring} strokeWidth="2.500" />
      <circle cx="19" cy="19" r="15.500" fill="none" stroke="#ffffff90" />
      <path d="M5 15C8 3 30 3 33 15c-8 4-20 4-28 0z" fill="#fff" opacity=".35" />
      {children}
    </svg>
  );
}

const apps: { label: string; state?: "run" | "on" | "multi"; icon: ReactNode }[] = [
  { label: "Internet Explorer", state: "multi", icon: <svg width="40" height="38" viewBox="0 0 40 38"><path d="M35 25c-3 7-8 10-15 10C12 35 6 29 6 20S12 5 20 5c10 0 16 8 15 17H14c1 8 10 8 12 3zM14 17h13c-1-6-11-7-13 0z" fill="#46b8ee" stroke="#1e86c4" strokeWidth=".8" /><path d="M9 36C1 38-1 32 6 21 13 9 27-1 35 2c4 2 3 7 0 11 2-5 2-8-2-8-8 0-20 11-25 19-4 7-4 12 1 12z" fill="#f8c51c" stroke="#d89a10" strokeWidth=".5" /></svg> },
  { label: "エクスプローラー", icon: <svg width="40" height="38" viewBox="0 0 40 38"><path d="M2 4h14l2 3h20v26H2z" fill="#e8c863" /><path d="M5 2h12v4H5zM20 5h12v4H20z" fill="#fff" /><path d="M8 2h3v3H8z" fill="#3a9d4a" /><path d="M14 5h3v3h-3z" fill="#d04a3a" /><path d="M28 6h5v3h-5z" fill="#3a8fd0" /><path d="M1 10h14l2-2h22l-1 27H2z" fill="#f7e49c" stroke="#d9b95c" strokeWidth=".8" /><path d="M6 37V25c0-2 1-3 3-3h22c2 0 3 1 3 3v12h-8v-6H14v6z" fill="#8ecbec" stroke="#5fa4cc" /></svg> },
  { label: "ストア", icon: <svg width="38" height="38" viewBox="0 0 38 38"><rect width="38" height="38" fill="#0a8a0a" /><path d="M5 13l27-2v21L7 33z" fill="#fff" /><path d="M11 14c-1-12 12-13 12-2M15 13c0-6 9-7 9-1" fill="none" stroke="#fff" strokeWidth="2" /><path d="M10 18l6-.5v5h-6zM17 17.500l6-.5v5.500h-6zM10 23.500h6v5l-6-.5zM17 23.500h6v5.500l-6-.5z" fill="#0a8a0a" /></svg> },
  { label: "PC設定", icon: <svg width="40" height="36" viewBox="0 0 40 36"><path d="M14 6l18 3-4 17-16-3z" fill="#2a2a30" stroke="#77787c" strokeWidth="1.500" /><path d="M11 23l17 4-6 7-21-6z" fill="#55565c" stroke="#999" /><path d="M9 26l14 3M7 28l14 3" stroke="#222" strokeWidth="1.200" /><circle cx="29" cy="9" r="5" fill="none" stroke="#d6d8dc" strokeWidth="5" /><circle cx="29" cy="9" r="8" fill="none" stroke="#d6d8dc" strokeWidth="3" strokeDasharray="3 2" /></svg> },
  { label: "ディスク", icon: <Orb ring="#46b8e6" inner="#10527a"><circle cx="19" cy="19" r="11" fill="#d5f1ff" /><circle cx="19" cy="19" r="3.500" fill="#5cb4de" stroke="#10527a" /><circle cx="19" cy="19" r="1.500" fill="#10527a" /><path d="M25 19h3" stroke="#5cb4de" strokeWidth="2" /></Orb> },
  { label: "ビデオ", icon: <Orb ring="#46b8e6" inner="#0b2c42"><path d="M7 12h5v2h14v-2h5v14h-5v-2H12v2H7z" fill="#bfeaff" /><path d="M13 16h12v6H13z" fill="#1a5c82" /><path d="M8 14h3v2H8zM8 18h3v2H8zM8 22h3v2H8zM27 14h3v2h-3zM27 18h3v2h-3zM27 22h3v2h-3z" fill="#0b2c42" /></Orb> },
  { label: "オーディオ編集", icon: <Orb ring="#e04a4a" inner="#2a0808"><path d="M3 15h32v8H3z" fill="#ffc9c9" /><path d="M5 12v14M8 14v10M11 11v15M14 13v14M17 11v14M20 13v14M23 10v16M26 13v12M29 11v15M33 13v12" stroke="#ffc9c9" strokeWidth="2" /></Orb> },
  { label: "ミュージック", icon: <Orb ring="#a8d83a" inner="#14200a"><path d="M14 26V12h12v13" fill="none" stroke="#d8f56a" strokeWidth="3" /><circle cx="12.500" cy="26" r="3" fill="#d8f56a" /><circle cx="24" cy="25" r="3" fill="#d8f56a" /></Orb> },
  { label: "メディアサーバー", icon: <svg width="38" height="38" viewBox="0 0 38 38"><circle cx="12" cy="12" r="10.500" fill="#2f94c4" /><path d="M5 8h14v8H5z" fill="#d8f0fb" /><path d="M8 9.500h8v5H8z" fill="#2f94c4" /><path d="M12 22v6M3 28h16" stroke="#3aa4d4" strokeWidth="2" /><rect x="18" y="24" width="19" height="13" fill="#2cb534" stroke="#fff" strokeWidth="1.800" /><path d="M25 27l7 3.500-7 3z" fill="#fff" /></svg> },
  { label: "Skype", state: "run", icon: <svg width="38" height="38" viewBox="0 0 38 38"><circle cx="19" cy="19" r="16" fill="#00aff0" /><circle cx="11" cy="11" r="10" fill="#00aff0" /><circle cx="28" cy="28" r="9.500" fill="#00a4e4" /><path d="M26 14c-1-4-13-5-13 0 0 6 14 3 14 10 0 6-14 6-15-1" fill="none" stroke="#fff" strokeWidth="4" strokeLinecap="round" /></svg> },
  { label: "CLIP STUDIO", state: "run", icon: <svg width="36" height="36" viewBox="0 0 36 36"><rect width="36" height="36" fill="url(#cm)" /><rect x="3" y="12" width="30" height="12" rx="5" fill="#fff" stroke="#2a9fae" strokeWidth="2" /><path d="M13 15H9c-4 0-4 6 0 6h4M16 13v8h4M23 17v4M33 15h-5c-3 0-3 3 0 3s3 4 0 4h-4" fill="none" stroke="#2a9fae" strokeWidth="2" /><path d="M22 13h2v2h-2z" fill="#e0603a" /></svg> },
  { label: "CLIP STUDIO PAINT", state: "on", icon: <ClipMark /> },
  { label: "ペイント", state: "run", icon: <svg width="40" height="38" viewBox="0 0 40 38"><path d="M2 23C3 11 15 4 26 6c9 2 12 10 9 17-4 8-12 12-20 11-5-1 0-6-4-8-4-1-8 3-9-3z" fill="#cfe6f7" stroke="#7fa8c8" /><circle cx="7" cy="20" r="3" fill="#d83a2a" /><circle cx="13" cy="13" r="3" fill="#4ab04a" /><circle cx="21" cy="10" r="3" fill="#f0b428" /><circle cx="17" cy="22" r="2.500" fill="#8a97a4" /><path d="M35 5L20 37" stroke="#e08a2c" strokeWidth="2.500" /><path d="M31 2c3-3 6-1 9 1-1 2-3 5-5 6-2-1-3-3-4-7z" fill="#b5793c" /></svg> },
];

function Taskbar() {
  return (
    <footer className="relative flex h-12 shrink-0 overflow-hidden bg-[#b27d24] font-['DejaVu_Sans',sans-serif]">
      <svg viewBox="0 0 1920 48" preserveAspectRatio="none" className="absolute inset-0 h-full w-full" aria-hidden>
        <defs>
          <linearGradient id="wp"><stop offset="0" stopColor="#b58330" /><stop offset=".3" stopColor="#b27c22" /><stop offset=".47" stopColor="#ae7a26" /><stop offset=".53" stopColor="#9a7936" /><stop offset=".56" stopColor="#94732e" /></linearGradient>
          <linearGradient id="wt"><stop offset="0" stopColor="#b39c68" /><stop offset="1" stopColor="#bba06a" /></linearGradient>
        </defs>
        <path d="M0 0h1920v48H0z" fill="url(#wp)" />
        <path d="M1062 0h858v48h-848z" fill="url(#wt)" />
        <path d="M1716 0h204v48h-110c-30-18-60-36-94-48z" fill="#c2932f" />
        <path d="M1716 0c40 9 80 26 110 48h-22c-26-20-56-38-88-48z" fill="#b8861f" />
        <path d="M0 .5h1920" stroke="#8f6a2a" />
      </svg>
      <button aria-label="スタート" className="relative flex w-[61px] items-center justify-center">
        <svg width="33" height="34" viewBox="0 0 33 34"><path d="M0 5l14-2v13H0zM15.500 2.500L33 0v16H15.500zM0 17.500h14v13L0 28.500zM15.500 17.500H33V34l-17.500-2.500z" fill="#fff" /></svg>
      </button>
      {apps.map((a) => (
        <div key={a.label} className="relative flex w-[73px] shrink-0 pr-[3px]">
          <button
            aria-label={a.label}
            className={
              "flex flex-1 items-center justify-center " +
              (a.state === "on" ? "border border-[#f3e6cf] bg-[#ead0b480]" : a.state === "run" ? "border border-[#dcc494] bg-[#d6b48066]" : a.state === "multi" ? "mr-[7px] border border-[#dcc494] bg-[#e0c89066]" : "")
            }
          >
            {a.icon}
          </button>
          {a.state === "multi" && <span className="absolute inset-y-0 right-[3px] w-[8px] border-r border-[#dcc494] bg-[linear-gradient(90deg,#dcc494_1px,transparent_1px_4px,#dcc494_4px_5px,transparent_5px)]" />}
        </div>
      ))}
      <div className="relative ml-auto flex items-center pr-[22px] text-white">
        <svg width="39" height="24" viewBox="0 0 39 24" aria-label="タッチキーボード"><rect x=".75" y=".75" width="37.500" height="22.500" rx="2" fill="#fff" stroke="#4f4838" strokeWidth="1.500" /><path d="M4.500 5h30v14h-30zM4.500 10h30M4.500 14.500h30M9.500 5v9.500M14.500 5v9.500M19.500 5v9.500M24.500 5v9.500M29.500 5v9.500M11.500 14.500V19M27.500 14.500V19" fill="none" stroke="#4f4838" strokeWidth="1.300" /></svg>
        <Caret w={10} h={6} c="#fff" className="ml-[15px] rotate-180" />
        <svg width="20" height="16" viewBox="0 0 20 16" className="mt-1 ml-[14px]"><rect x=".75" y=".75" width="18.500" height="14.500" rx="2" fill="#fff" stroke="#000" strokeWidth="1.500" /><path d="M3 3.500h14V8H3zM3 10h6v2.500H3zM11 10h6v2.500h-6z" fill="#000" /></svg>
        <svg width="18" height="20" viewBox="0 0 18 20" className="ml-[12px]"><path d="M2 1v4M5 1v4M.5 5h6v4l-2 2v8h-2v-8l-2-2z" fill="#fff" stroke="#fff" /><rect x="9" y="2" width="8" height="17" fill="#ffffff40" stroke="#fff" strokeWidth="1.800" /><path d="M11 0h4v2h-4z" fill="#fff" /></svg>
        <svg width="16" height="17" viewBox="0 0 16 17" className="mt-1 ml-[11px]"><path d="M0 14h2v3H0zM3.500 11h2v6h-2zM7 8h2v9H7zM10.500 4h2v13h-2zM14 0h2v17h-2z" fill="#fff" /></svg>
        <svg width="18" height="20" viewBox="0 0 18 20" className="ml-[15px]"><path d="M1 6h2v8H1zM4 6l6-5v18l-6-5z" fill="#fff" /><path d="M13 6c3 2 3 6 0 8" fill="none" stroke="#fff" strokeWidth="1.500" /></svg>
        <span className="ml-[16px] w-[15px] text-center font-['Noto_Sans',sans-serif] text-[22px] leading-none">A</span>
        <svg width="20" height="20" viewBox="0 0 20 20" className="ml-[18px]"><rect width="20" height="20" fill="#fff" /><rect x=".75" y=".75" width="18.500" height="18.500" fill="none" stroke="#333" /><circle cx="10" cy="10" r="8" fill="#111" /><path d="M12 5v6c0 3-4 4-5 1" fill="none" stroke="#fff" strokeWidth="2" /></svg>
        <time className="ml-[26px] pt-[5px] text-center text-[15px] leading-[21px]">22:12<br />2015/04/28</time>
      </div>
    </footer>
  );
}

export default function App() {
  return (
    <div className="relative flex h-screen flex-col overflow-hidden bg-[#e8e8ea] font-['Liberation_Sans','Noto_Sans_CJK_JP',sans-serif] text-[14px] text-black [font-feature-settings:'palt']">
      <header className="flex h-9 shrink-0 items-center justify-between border-t border-b border-[#b0b1b4] bg-[#ebebec] pr-px pl-[966px]">
        <h1 className="pt-px font-['Noto_Sans',sans-serif] text-[21px] leading-8 whitespace-pre text-[#77787b]">100.0%)  - CLIP STUDIO PAINT PRO</h1>
        <div className="flex gap-[3px]">
          <WindowBtn label="最小化"><path d="M1 11.500h14" strokeWidth="3" /></WindowBtn>
          <WindowBtn label="元に戻す"><path d="M2.500 2.500h11v11h-11z" strokeWidth="2.500" /><path d="M6 6h4v4H6z" fill="#aaa" stroke="none" /></WindowBtn>
          <WindowBtn label="閉じる"><path d="M3 3l10 10M13 3L3 13" strokeWidth="3" /></WindowBtn>
        </div>
      </header>
      <nav aria-label="メニュー" className="h-9 shrink-0 border-b border-[#b4b6ba] bg-[#f3f6fb]" />
      <div className="flex min-h-0 flex-1 border-b-2 border-[#f3f6fb]">
        <div className="flex min-w-0 flex-1 flex-col">
          <Toolbar />
          <div className="flex min-h-0 flex-1">
            <ToolColumn />
            <BrushPanel />
            <CanvasArea />
          </div>
        </div>
        <aside className="flex w-[325px] shrink-0 flex-col border-l border-[#a9abb0] bg-[#f3f6fb]">
          <div className="flex h-[31px] shrink-0 items-center justify-between border-b border-[#b4b6ba] bg-[#e9e9eb] pr-[5px] pl-[5px]">
            <svg width="13" height="11" viewBox="0 0 13 11" aria-hidden><path d="M.5 0v11M6.500 0v11M12.500 0v11" stroke="#a9abb0" /></svg>
            <button aria-label="パレットを畳む"><svg width="8" height="20" viewBox="0 0 8 20"><path d="M0 0l8 10-8 10v-6l3-4-3-4z" fill="#97989c" /></svg></button>
          </div>
          <div className="flex min-h-0 flex-1 pl-px">
            <LayerPanels />
            <DockTabs />
          </div>
        </aside>
      </div>
      <Taskbar />
      <SaveDialog />
    </div>
  );
}
